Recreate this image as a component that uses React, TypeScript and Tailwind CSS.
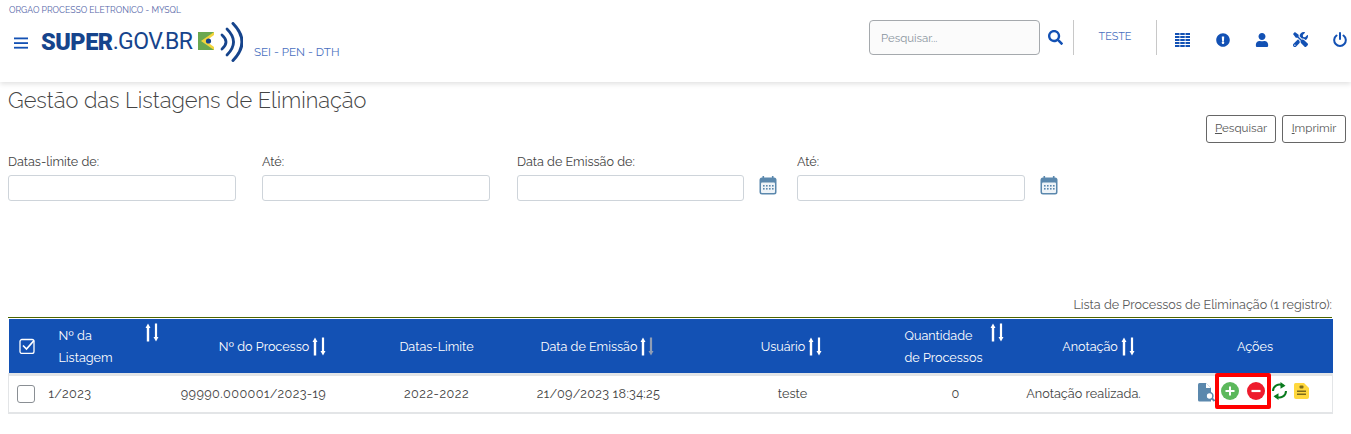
import React from "react";
import { FaTools, FaUser, FaExclamationCircle } from "react-icons/fa";

const F = "font-['Raleway','Lato','Liberation_Sans',sans-serif]";

function SortArrows({ dim = false }: { dim?: boolean }) {
  return (
    <svg width="16" height="19" viewBox="0 0 16 19" className="shrink-0">
      <path d="M3 0.5 L5.5 5 H4.2 V18.5 H1.8 V5 H0.5 Z" fill="#fff" />
      <path d="M11 18.5 L8.5 14 H9.9 V0.5 H12.1 V14 H13.5 Z" fill={dim ? "#8f9db5" : "#fff"} />
    </svg>
  );
}

function Cal() {
  return (
    <svg width="18" height="19" viewBox="0 0 18 19">
      <rect x="0.5" y="1.5" width="17" height="17" rx="2.5" fill="#5b88ad" />
      <rect x="2" y="6.5" width="14" height="10.5" rx="1" fill="#eef3f7" />
      <rect x="3.5" y="0" width="1.6" height="3" fill="#5b88ad" />
      <rect x="12.9" y="0" width="1.6" height="3" fill="#5b88ad" />
      {[5, 8, 11, 14].map((x) => [9, 12].map((y) => <rect key={`${x}${y}`} x={x - 1} y={y} width="1.6" height="1.6" fill="#5b88ad" />))}
    </svg>
  );
}

function Field({ label, w, icon, ml }: { label: string; w: string; icon?: boolean; ml: string }) {
  return (
    <div className={ml}>
      <div className="text-[12.6px] leading-[20px] text-[#444] h-[23px] whitespace-nowrap">{label}</div>
      <div className="flex items-center">
        <div className={`${w} h-[26px] border border-[#ced4da] rounded-[3px] bg-white`} />
        {icon && <span className="ml-[15px] -mt-[5px] flex"><Cal /></span>}
      </div>
    </div>
  );
}

function Th({ children, className = "" }: { children: React.ReactNode; className?: string }) {
  return <th className={`font-normal text-[12.6px] leading-[22px] text-white align-middle p-0 pt-[2px] whitespace-nowrap ${className}`}>{children}</th>;
}

function Head({ label, dim }: { label: string; dim?: boolean }) {
  return (
    <span className="inline-flex items-center gap-[3px]">
      {label}
      <SortArrows dim={dim} />
    </span>
  );
}

export default function App() {
  return (
    <div className={`${F} w-[1351px] h-[434px] bg-white overflow-hidden`}>
      <header className="h-[82px] bg-white shadow-[0_2px_5px_rgba(0,0,0,0.12)] flex relative z-10">
        <div className="w-[600px] shrink-0">
          <div className="pl-[9px] pt-[4px] text-[8.65px] leading-[13px] text-[#5566a8]">ORGAO PROCESSO ELETRONICO - MYSQL</div>
          <div className="flex items-start pl-[14px] pt-[4px]">
            <svg width="15" height="12" viewBox="0 0 15 12" className="mt-[16px] shrink-0">
              <rect x="0" y="0.5" width="14" height="1.8" fill="#1351b4" />
              <rect x="0" y="5.2" width="14" height="1.8" fill="#1351b4" />
              <rect x="0" y="9.8" width="14" height="1.8" fill="#1351b4" />
            </svg>
            <div className="ml-[12px] mt-[6px] w-[151px] shrink-0 flex items-center h-[30px] text-[#16448c] whitespace-nowrap">
              <span className="font-['Roboto'] font-black text-[23.5px] tracking-[-0.5px] leading-[30px]">SUPER</span>
              <span className="font-['Roboto'] font-normal text-[23px] tracking-[-0.6px] leading-[30px]">.GOV.BR</span>
            </div>
            <svg width="46" height="40" viewBox="0 0 46 40" className="ml-[5px] mt-[1px] shrink-0">
              <rect x="1" y="10" width="16" height="18" fill="#6aa84f" />
              <path d="M4 19 L17 10 V28 Z" fill="#f2d53c" />
              <path d="M9 19 L17 13 V25 Z" fill="#fff" />
              <circle cx="11.5" cy="19" r="2.6" fill="#16448c" />
              <path d="M25 13 Q33 20 25 27" stroke="#16448c" strokeWidth="2.8" fill="none" strokeLinecap="round" />
              <path d="M30 7 Q43 20 30 33" stroke="#16448c" strokeWidth="2.8" fill="none" strokeLinecap="round" />
              <path d="M36 1.5 Q54 20 36 38.5" stroke="#16448c" strokeWidth="3" fill="none" strokeLinecap="round" />
            </svg>
            <div className="ml-[11px] mt-[23px] text-[11.6px] leading-[16px] text-[#4a6fc0] whitespace-nowrap">SEI - PEN - DTH</div>
          </div>
        </div>
        <div className="flex-1 flex items-start pt-[20px] justify-end">
          <div className="w-[171px] h-[35px] border border-[#a5a9ad] rounded-[4px] bg-[#fbfbfb] pl-[11px] pt-[2px] flex items-center text-[11.4px] text-[#8a949e]">Pesquisar...</div>
          <svg width="15" height="15" viewBox="0 0 512 512" className="ml-[8px] mt-[10px]" fill="#1351b4">
            <path d="M505 442.7L405.3 343c-4.5-4.5-10.6-7-17-7H372c27.6-35.3 44-79.7 44-128C416 93.1 322.9 0 208 0S0 93.1 0 208s93.1 208 208 208c48.3 0 92.7-16.4 128-44v16.3c0 6.4 2.5 12.5 7 17l99.7 99.7c9.4 9.4 24.6 9.4 33.9 0l28.3-28.3c9.4-9.4 9.4-24.6.1-34zM208 336c-70.7 0-128-57.2-128-128 0-70.7 57.2-128 128-128 70.7 0 128 57.2 128 128 0 70.7-57.2 128-128 128z" />
          </svg>
          <div className="ml-[10px] w-px h-[35px] bg-[#c8c8c8]" />
          <div className="w-[82px] text-center text-[10.8px] leading-[33px] text-[#4a6fc0]">TESTE</div>
          <div className="w-px h-[35px] bg-[#c8c8c8]" />
          <div className="ml-[18px] mt-[12px] flex items-center gap-[25px] w-[176px] text-[#1351b4]">
            <svg width="15" height="14" viewBox="0 0 15 14" fill="#1351b4" className="shrink-0">
              {[0, 3, 6, 9, 12].map((y) => (
                <g key={y}>
                  <rect x="0" y={y} width="4.5" height="2" />
                  <rect x="5.25" y={y} width="4.5" height="2" />
                  <rect x="10.5" y={y} width="4.5" height="2" />
                </g>
              ))}
            </svg>
            <FaExclamationCircle size={14} className="shrink-0 ml-[1px]" />
            <FaUser size={14} className="shrink-0" />
            <FaTools size={15} className="shrink-0 -ml-[1px]" />
            <svg width="14" height="15" viewBox="0 0 14 15" fill="none" stroke="#1351b4" strokeWidth="2" strokeLinecap="round" className="shrink-0">
              <path d="M7 1 V7" />
              <path d="M3.5 3.5 A5.8 5.8 0 1 0 10.5 3.5" />
            </svg>
          </div>
        </div>
      </header>

      <main>
        <h1 className="pl-[8px] pt-[5px] text-[21.8px] leading-[28px] font-light text-[#444]">Gestão das Listagens de Eliminação</h1>
        <div className="flex justify-end gap-[6px] pr-[5px] h-[28px]">
          <button className="h-[28px] w-[70px] border border-[#666] rounded-[3px] text-[11.6px] text-[#555] bg-white"><u>P</u>esquisar</button>
          <button className="h-[28px] w-[64px] border border-[#666] rounded-[3px] text-[11.6px] text-[#555] bg-white"><u>I</u>mprimir</button>
        </div>
        <div className="flex pl-[8px] mt-[9px] h-[143px] items-start">
          <Field label="Datas-limite de:" w="w-[228px]" ml="" />
          <Field label="Até:" w="w-[228px]" ml="ml-[26px]" />
          <Field label="Data de Emissão de:" w="w-[227px]" icon ml="ml-[27px]" />
          <Field label="Até:" w="w-[228px]" icon ml="ml-[20px]" />
        </div>
        <div className="pr-[19px] text-right text-[12.6px] leading-[20px] text-[#5a5a5a]">Lista de Processos de Eliminação (1 registro):</div>
        <div className="ml-[8px] mr-[19px] mt-[2px] border-t border-[#4d6500] pt-px">
          <table className="w-[1324px] border-collapse table-fixed">
            <colgroup>
              <col className="w-[37px]" />
              <col className="w-[125px]" />
              <col className="w-[166px]" />
              <col className="w-[200px]" />
              <col className="w-[124px]" />
              <col className="w-[220px]" />
              <col className="w-[140px]" />
              <col className="w-[126px]" />
              <col className="w-[186px]" />
            </colgroup>
            <thead>
              <tr className="bg-[#1351b4] h-[55px]">
                <Th className="text-center">
                  <svg width="16" height="16" viewBox="0 0 16 16" className="inline-block -translate-y-[1px]" fill="none" stroke="#fff">
                    <rect x="1" y="1.5" width="14" height="14" rx="2" strokeWidth="1.3" />
                    <path d="M4 7.5 L7.5 11 L15 2.5" strokeWidth="1.7" />
                  </svg>
                </Th>
                <Th className="text-left pl-[13px]">
                  <div className="flex items-start justify-between pr-[10px]">
                    <span>Nº da<br />Listagem</span>
                    <span className="mt-[-2px]"><SortArrows /></span>
                  </div>
                </Th>
                <Th className="text-center pl-[40px]"><Head label="Nº do Processo" /></Th>
                <Th className="text-center">Datas-Limite</Th>
                <Th className="text-center"><Head label="Data de Emissão" dim /></Th>
                <Th className="text-center pl-[44px]"><Head label="Usuário" /></Th>
                <Th className="text-left pl-[24px]">
                  <div className="flex items-start">
                    <span>Quantidade<br />de Processos</span>
                    <span className="ml-[8px] mt-[-2px]"><SortArrows /></span>
                  </div>
                </Th>
                <Th className="text-center pl-[32px]"><Head label="Anotação" /></Th>
                <Th className="text-center pl-[31px]">Ações</Th>
              </tr>
            </thead>
            <tbody>
              <tr className="h-[38px] border-b-2 border-x border-[#e3e5e7] border-t-[3px] text-[12.7px] text-[#444] text-center whitespace-nowrap">
                <td className="p-0"><span className="block w-[18px] h-[18px] ml-[8px] border border-[#8a8f94] rounded-[3px] bg-white" /></td>
                <td className="p-0 text-left pl-[3px] tracking-[0.4px]">1/2023</td>
                <td className="p-0 tracking-[0.4px]">99990.000001/2023-19</td>
                <td className="p-0 tracking-[0.5px]">2022-2022</td>
                <td className="p-0 tracking-[0.3px]">21/09/2023 18:34:25</td>
                <td className="p-0 pl-[44px]">teste</td>
                <td className="p-0 pl-[10px]">0</td>
                <td className="p-0">Anotação realizada.</td>
                <td className="p-0">
                  <div className="flex items-center pl-[51px] -translate-y-[3px]">
                    <svg width="17" height="19" viewBox="0 0 17 19" className="shrink-0 translate-y-[2px]">
                      <path d="M0 1.5 Q0 0 1.5 0 H8 L13 5 V18.5 H1.5 Q0 18.5 0 17 Z" fill="#5b88ad" />
                      <path d="M8 0 V5 H13" fill="#fff" />
                      <circle cx="11.5" cy="13" r="3.4" fill="#fff" stroke="#5b88ad" strokeWidth="1.5" />
                      <path d="M14 15.5 L16.5 18" stroke="#5b88ad" strokeWidth="2" />
                    </svg>
                    <div className="shrink-0 w-[56px] h-[36px] border-[4px] border-[#ff0000] rounded-[2px] flex items-center gap-[8px] pl-[2px]">
                      <span className="w-[18px] h-[18px] rounded-full bg-[#5cb85c] flex items-center justify-center shrink-0">
                        <svg width="10" height="10" viewBox="0 0 10 10"><path d="M5 0.5 V9.5 M0.5 5 H9.5" stroke="#fff" strokeWidth="2" /></svg>
                      </span>
                      <span className="w-[18px] h-[18px] rounded-full bg-[#ee1c2d] flex items-center justify-center shrink-0">
                        <svg width="10" height="10" viewBox="0 0 10 10"><path d="M0.5 5 H9.5" stroke="#fff" strokeWidth="2.2" /></svg>
                      </span>
                    </div>
                    <svg width="19" height="20" viewBox="0 0 17 20" className="-ml-[1px] shrink-0" fill="none" stroke="#0a7a1e" strokeWidth="2">
                      <path d="M2 10 A6.5 6.5 0 0 1 12 4.5" />
                      <path d="M15 10 A6.5 6.5 0 0 1 5 15.5" />
                      <path d="M9.5 1 L14.5 4.8 L9.5 7.8 Z" fill="#0a7a1e" stroke="none" />
                      <path d="M7.5 12.2 L2.5 15.2 L7.5 19 Z" fill="#0a7a1e" stroke="none" />
                    </svg>
                    <svg width="15" height="16" viewBox="0 0 15 16" className="ml-[5px] shrink-0">
                      <path d="M1.5 0 H10 L15 5 V14 Q15 16 13 16 H2 Q0 16 0 14 V1.5 Q0 0 1.5 0 Z" fill="#ffd83d" />
                      <rect x="5.5" y="2.5" width="4" height="3" rx="1" fill="#7d6b1a" />
                      <rect x="3" y="7.5" width="9" height="1.5" fill="#7d6b1a" />
                      <rect x="3" y="10.5" width="9" height="1.5" fill="#7d6b1a" />
                    </svg>
                  </div>
                </td>
              </tr>
            </tbody>
          </table>
        </div>
      </main>
    </div>
  );
}
